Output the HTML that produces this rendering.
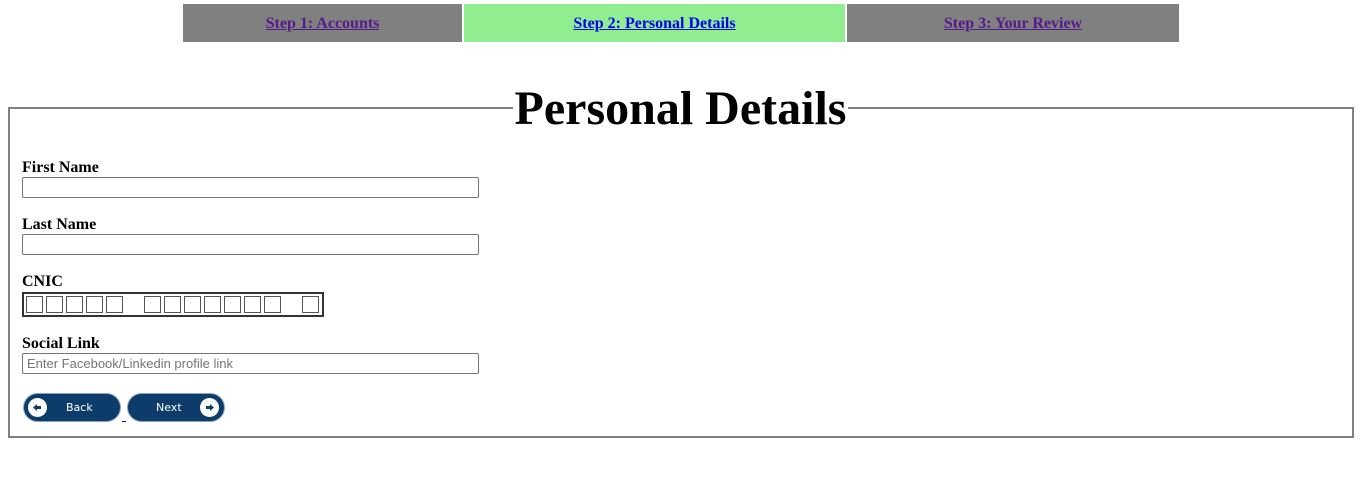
<!DOCTYPE html>
<html><head><meta charset="utf-8"><style>
body{margin:0;width:1364px;height:489px;background:#fff;position:relative;font-family:"Liberation Serif",serif;overflow:hidden}
.tab{position:absolute;top:4px;height:38px;line-height:39px;text-align:center;font-weight:bold;font-size:16px}
.tab a{text-decoration:underline}
.fs{position:absolute;left:8px;top:107px;width:1342px;height:327px;border:2px solid #808080}
.leg{position:absolute;left:513px;top:82px;width:335px;background:#fff;text-align:center;font-weight:bold;font-size:48px;line-height:54px}
.lbl{position:absolute;left:22px;font-weight:bold;font-size:16px;line-height:16px}
.inp{position:absolute;left:22px;width:457px;height:21px;border:1px solid #767676;border-radius:2px;box-sizing:border-box;font-family:"Liberation Sans",sans-serif;font-size:13px;color:#757575;padding-left:4px;line-height:19px}
.cnic{position:absolute;left:22px;top:292px;width:302px;height:25px;border:2px solid #333;box-sizing:border-box}
.c{position:absolute;top:2px;width:17px;height:17px;border:1px solid #555;box-sizing:border-box}
.btn{position:absolute;top:394px;width:96px;height:27px;background:#0d3c6b;border-radius:14px;color:#fff;font-family:"DejaVu Sans",sans-serif;font-size:11px;line-height:27px;box-shadow:0 0 0 1px #8aa4c0}
.ci{position:absolute;top:4px;width:19px;height:19px;border-radius:50%;background:#fff}
</style></head><body>
<div class="tab" style="left:183px;width:279px;background:#808080"><a style="color:#551a8b">Step 1: Accounts</a></div>
<div class="tab" style="left:464px;width:381px;background:#90ee90"><a style="color:#0000ee">Step 2: Personal Details</a></div>
<div class="tab" style="left:847px;width:332px;background:#808080"><a style="color:#551a8b">Step 3: Your Review</a></div>
<div class="fs"></div>
<div class="leg">Personal Details</div>
<div class="lbl" style="top:160px">First Name</div>
<div class="inp" style="top:177px"></div>
<div class="lbl" style="top:217px">Last Name</div>
<div class="inp" style="top:234px"></div>
<div class="lbl" style="top:274px">CNIC</div>
<div class="cnic">
<div class="c" style="left:2px"></div><div class="c" style="left:22px"></div><div class="c" style="left:42px"></div><div class="c" style="left:62px"></div><div class="c" style="left:82px"></div>
<div class="c" style="left:120px"></div><div class="c" style="left:140px"></div><div class="c" style="left:160px"></div><div class="c" style="left:180px"></div><div class="c" style="left:200px"></div><div class="c" style="left:220px"></div><div class="c" style="left:240px"></div>
<div class="c" style="left:278px"></div>
</div>
<div class="lbl" style="top:336px">Social Link</div>
<div class="inp" style="top:353px">Enter Facebook/Linkedin profile link</div>
<div class="btn" style="left:24px"><div class="ci" style="left:4px"><svg width="19" height="19"><path d="M5 9.5 L9 6 V8 H13 V11 H9 V13 Z" fill="#0d3c6b"/></svg></div><span style="position:absolute;left:42px">Back</span></div>
<div class="btn" style="left:128px"><span style="position:absolute;left:28px">Next</span><div class="ci" style="left:72px"><svg width="19" height="19"><path d="M14 9.5 L10 6 V8 H6 V11 H10 V13 Z" fill="#0d3c6b"/></svg></div></div>
<div style="position:absolute;left:122px;top:421px;width:4px;height:1px;background:#0000ee"></div>
</body></html>
